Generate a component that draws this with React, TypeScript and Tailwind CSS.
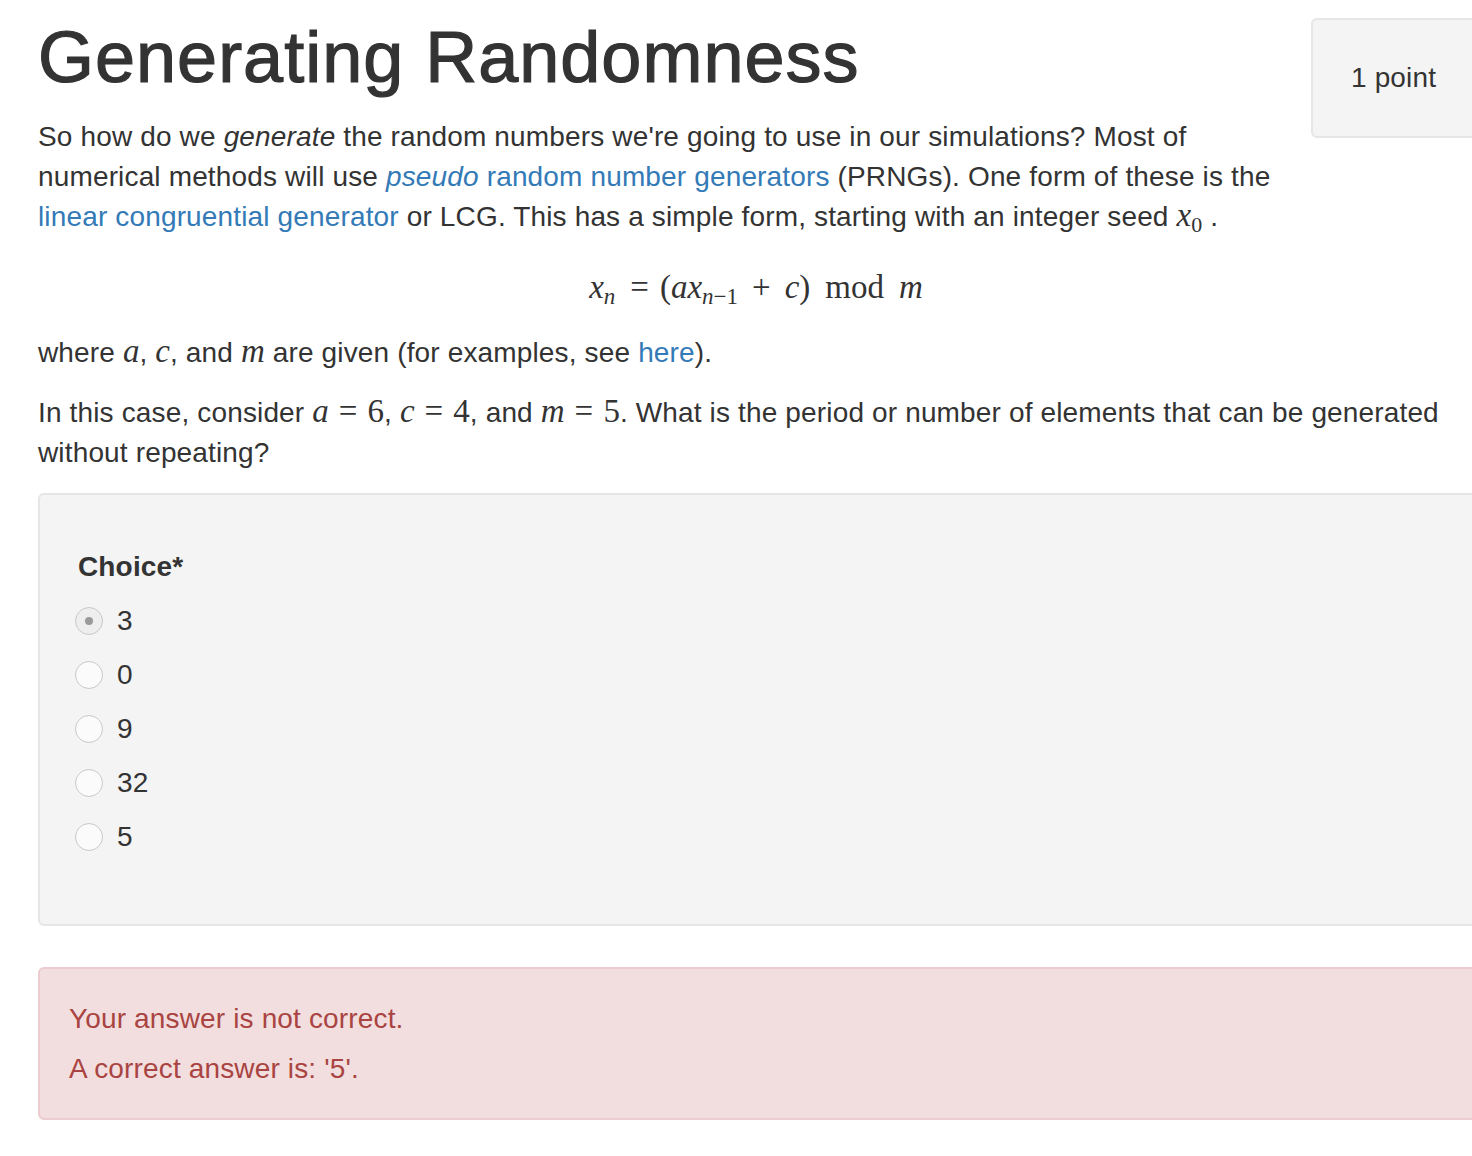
const sans = "font-['Liberation_Sans',Arial,sans-serif]";
const serif = "font-['Liberation_Serif','Times_New_Roman',serif]";

const M = ({ children, italic = true }: { children: React.ReactNode; italic?: boolean }) => (
  <span className={`${serif} text-[33px] leading-none tracking-normal ${italic ? "italic" : ""}`}>{children}</span>
);

const Eq = () => <span className={`${serif} text-[33px] leading-none mx-[10px]`}>=</span>;

const Radio = ({ label, checked }: { label: string; checked?: boolean }) => (
  <div className="flex items-center h-[40px] mt-[14px]">
    <span
      className={`w-[28px] h-[28px] rounded-full border border-[#c8c8c8] flex items-center justify-center ml-[-3px] ${
        checked ? "bg-[#eeeeee]" : "bg-[#fbfbfb]"
      }`}
    >
      {checked && <span className="w-[8px] h-[8px] rounded-full bg-[#9a9a9a]" />}
    </span>
    <span className="ml-[14px]">{label}</span>
  </div>
);

export default function App() {
  return (
    <div
      className={`w-[1472px] min-h-[1156px] overflow-hidden bg-white text-[#333] ${sans} text-[28px] leading-[40px] tracking-[0.15px]`}
    >
      <div className="w-[1480px] pl-[38px]">
        <div className="flex items-start">
          <div className="flex-1 pr-[30px]">
            <h1 className="text-[72px] leading-[79px] font-medium mt-[18px] mb-[20px] tracking-[1px] [-webkit-text-stroke:1.2px_#333]">
              Generating Randomness
            </h1>
            <p>
              So how do we <em>generate</em> the random numbers we're going to use in our simulations? Most of
              numerical methods will use{" "}
              <a className="text-[#337ab7]">
                <em>pseudo</em> random number generators
              </a>{" "}
              (PRNGs). One form of these is the <a className="text-[#337ab7]">linear congruential generator</a> or
              LCG. This has a simple form, starting with an integer seed{" "}
              <M>
                x<sub className="not-italic text-[22px] leading-none">0</sub>
              </M>{" "}
              .
            </p>
          </div>
          <div className="mt-[18px] w-[169px] h-[120px] shrink-0 rounded-[6px] border-2 border-[#e6e6e6] bg-[#f4f4f4] flex items-center pl-[38px]">
            1 point
          </div>
        </div>

        <div className={`${serif} text-[33px] h-[56px] mt-[20px] mb-[20px] pt-[10px] flex justify-center tracking-normal`}>
          <span className="ml-[-6px]">
            <i>x</i>
            <sub className="italic text-[23px]">n</sub>
            <span className="ml-[15px] mr-[11px]">=</span>(<i>ax</i>
            <sub className="text-[23px]">
              <i>n</i>−1
            </sub>
            <span className="mx-[14px]">+</span>
            <i>c</i>)<span className="mx-[15px]">mod</span>
            <i>m</i>
          </span>
        </div>

        <p>
          where <M>a</M>, <M>c</M>, and <M>m</M> are given (for examples, see{" "}
          <a className="text-[#337ab7]">here</a>).
        </p>
        <p className="mt-[20px]">
          In this case, consider <M>a</M>
          <Eq />
          <M italic={false}>6</M>, <M>c</M>
          <Eq />
          <M italic={false}>4</M>, and <M>m</M>
          <Eq />
          <M italic={false}>5</M>. What is the period or number of elements that can be generated without
          repeating?
        </p>

        <div className="mt-[20px] h-[433px] rounded-[6px] border-2 border-[#e6e6e6] bg-[#f4f4f4] px-[38px] pt-[52px]">
          <div className="font-bold">Choice*</div>
          <Radio label="3" checked />
          <Radio label="0" />
          <Radio label="9" />
          <Radio label="32" />
          <Radio label="5" />
        </div>

        <div className="mt-[41px] h-[153px] rounded-[6px] border-2 border-[#ebccd1] bg-[#f2dede] text-[#a94442] px-[29px] pt-[30px]">
          <p>Your answer is not correct.</p>
          <p className="mt-[10px]">A correct answer is: '5'.</p>
        </div>
      </div>
    </div>
  );
}
